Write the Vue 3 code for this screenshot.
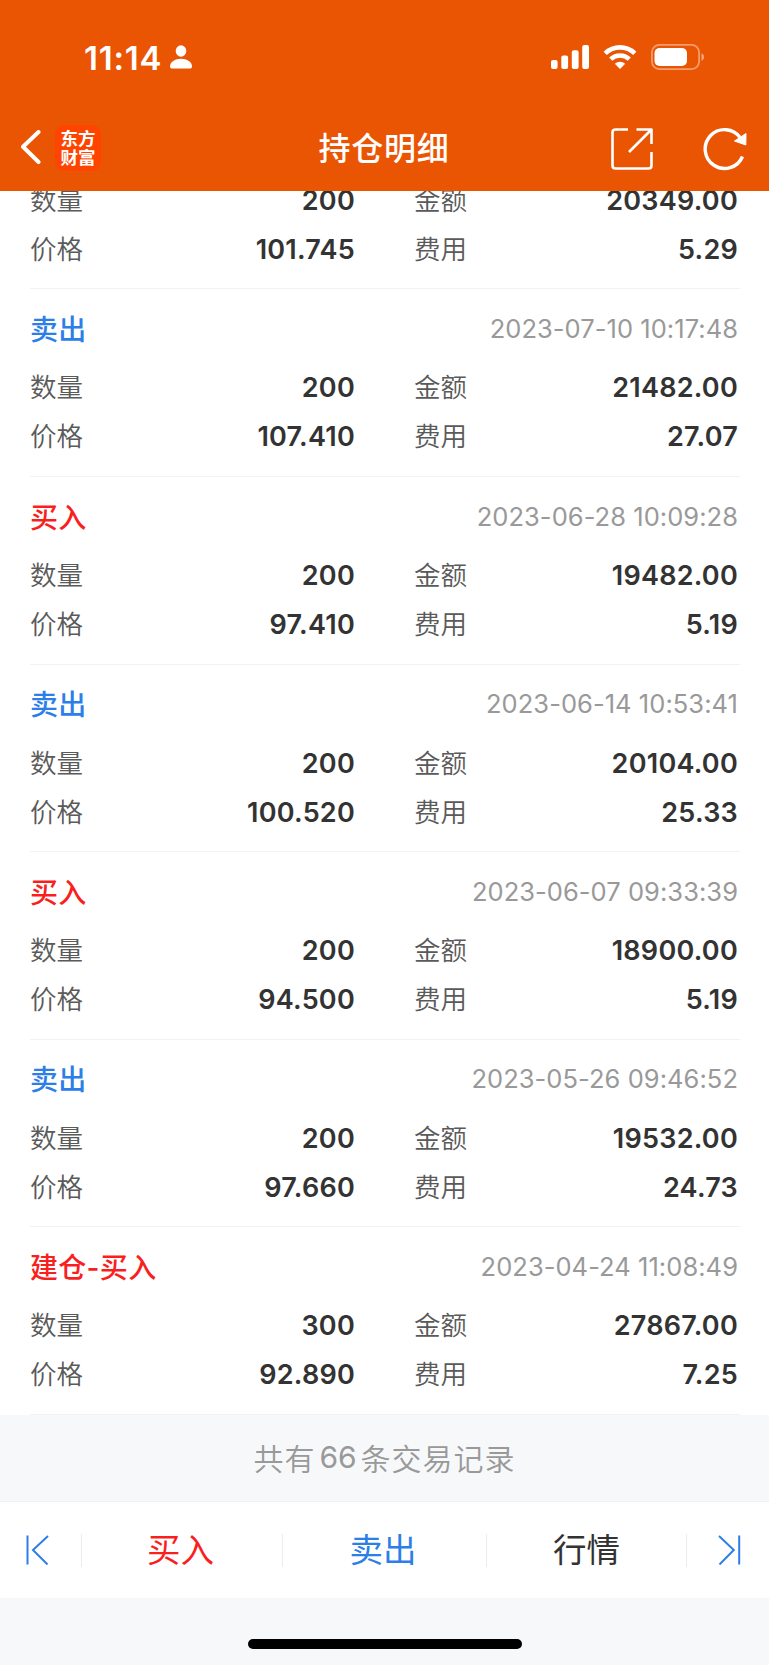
<template>
  <div class="page">
    <header class="header">
      <div class="status">
        <div class="clock">
          <span class="time">11:14</span>
          <svg class="person" width="22" height="24" viewBox="0 0 22 24">
            <ellipse cx="11" cy="6" rx="5.3" ry="5.8" />
            <path d="M0 21.5C0 17 5 13.8 11 13.8S22 17 22 21.5C22 23 21 23.5 19.8 23.5H2.2C1 23.5 0 23 0 21.5Z" />
          </svg>
        </div>
        <div class="signals">
          <svg width="38" height="24" viewBox="0 0 38 24">
            <rect x="0" y="15" width="6.6" height="9" rx="2" />
            <rect x="10.3" y="10.5" width="6.8" height="13.5" rx="2" />
            <rect x="20.8" y="5.2" width="6.8" height="18.8" rx="2" />
            <rect x="31.2" y="0" width="6.8" height="24" rx="2" />
          </svg>
          <svg class="wifi" width="34" height="24" viewBox="0 0 34 24">
            <path d="M2.2 8.3C10.5 0.4 23.5 0.4 31.8 8.3" />
            <path d="M7.7 14.1C13 9.2 21 9.2 26.3 14.1" />
            <path class="solid" d="M17 24L11.8 18.7C14.8 16 19.2 16 22.2 18.7Z" />
          </svg>
          <svg width="54" height="26" viewBox="0 0 54 26">
            <rect class="shell" x="0.9" y="0.9" width="47.2" height="24.2" rx="7.5" />
            <rect x="3.5" y="4" width="32.5" height="18" rx="5" />
            <path class="cap" d="M50.5 9.2C53.8 10.5 53.8 15.5 50.5 16.8Z" />
          </svg>
        </div>
      </div>
      <nav class="nav">
        <div class="nav-left">
          <svg class="line-icon" width="20" height="36" viewBox="0 0 20 36">
            <path class="back" d="M17.5 2L2 16.8L17.5 32" />
          </svg>
          <div class="logo"><span>东方</span><span>财富</span></div>
        </div>
        <h1 class="title">持仓明细</h1>
        <div class="nav-right">
          <svg class="line-icon" width="42" height="42" viewBox="0 0 42 42">
            <path d="M17 1.5H4.5Q1.5 1.5 1.5 4.5V37.5Q1.5 40.5 4.5 40.5H37.5Q40.5 40.5 40.5 37.5V24" />
            <path d="M25.5 1.5H40.5V16M40 2L18 24" />
          </svg>
          <svg class="line-icon" width="44" height="44" viewBox="0 0 44 44">
            <path class="arc" d="M39.5 29.5A19.4 19.4 0 1 1 37.5 11" />
            <path class="solid" d="M43 6.5L42.8 18L31.5 14Z" />
          </svg>
        </div>
      </nav>
    </header>

    <main class="list">
      <section v-for="item in records" :key="item.amount" class="record">
        <div v-if="item.type" class="record-head">
          <span class="type" :class="item.side">{{ item.type }}</span>
          <span class="date">{{ item.date }}</span>
        </div>
        <div class="row">
          <span class="label">数量</span>
          <span class="value">{{ item.count }}</span>
          <span class="label second">金额</span>
          <span class="value">{{ item.amount }}</span>
        </div>
        <div class="row">
          <span class="label">价格</span>
          <span class="value">{{ item.price }}</span>
          <span class="label second">费用</span>
          <span class="value">{{ item.fee }}</span>
        </div>
      </section>
    </main>

    <div class="total">共有<span class="num">66</span>条交易记录</div>

    <footer class="tabs">
      <div class="tab first">
        <svg class="step" width="24" height="30" viewBox="0 0 24 30">
          <path d="M1.5 0.5V29.5M22 1L7 15L21.5 29.5" />
        </svg>
      </div>
      <div class="tab buy">买入</div>
      <div class="tab sell">卖出</div>
      <div class="tab">行情</div>
      <div class="tab last">
        <svg class="step" width="24" height="30" viewBox="0 0 24 30">
          <path d="M22.2 0.5V29.5M2 1L16.8 15L2.5 29.5" />
        </svg>
      </div>
    </footer>
    <div class="home"><div class="home-bar"></div></div>
  </div>
</template>

<script setup>
const records = [
  { count: "200", amount: "20349.00", price: "101.745", fee: "5.29" },
  { type: "卖出", side: "sell", date: "2023-07-10 10:17:48", count: "200", amount: "21482.00", price: "107.410", fee: "27.07" },
  { type: "买入", side: "buy", date: "2023-06-28 10:09:28", count: "200", amount: "19482.00", price: "97.410", fee: "5.19" },
  { type: "卖出", side: "sell", date: "2023-06-14 10:53:41", count: "200", amount: "20104.00", price: "100.520", fee: "25.33" },
  { type: "买入", side: "buy", date: "2023-06-07 09:33:39", count: "200", amount: "18900.00", price: "94.500", fee: "5.19" },
  { type: "卖出", side: "sell", date: "2023-05-26 09:46:52", count: "200", amount: "19532.00", price: "97.660", fee: "24.73" },
  { type: "建仓-买入", side: "buy", date: "2023-04-24 11:08:49", count: "300", amount: "27867.00", price: "92.890", fee: "7.25" },
];
</script>

<style>
body {
  margin: 0;
  background: #f7f8fa;
}
</style>

<style scoped>
.page {
  width: 769px;
  height: 1665px;
  display: flex;
  flex-direction: column;
  overflow: hidden;
  background: #f7f8fa;
  font-family: Inter, "Noto Sans CJK SC", sans-serif;
  color: #333;
}
.header {
  height: 191px;
  flex: none;
  background: #ea5504;
  color: #fff;
}
.header svg {
  display: block;
  fill: #fff;
}
.status {
  height: 114px;
  box-sizing: border-box;
  padding: 0 64px 0 84px;
  display: flex;
  align-items: center;
  justify-content: space-between;
}
.clock {
  display: flex;
  align-items: center;
  gap: 8px;
}
.time {
  padding-top: 2px;
  font-size: 33px;
  font-weight: 600;
  line-height: 40px;
  letter-spacing: 0.8px;
}
.signals {
  display: flex;
  align-items: center;
  gap: 14px;
}
.signals .wifi {
  fill: none;
  stroke: #fff;
  stroke-width: 4.6;
}
.signals .wifi .solid {
  fill: #fff;
  stroke: none;
}
.signals .shell {
  fill: none;
  stroke: rgba(255, 255, 255, 0.42);
  stroke-width: 1.8;
}
.signals .cap {
  fill: rgba(255, 255, 255, 0.5);
}
.nav {
  height: 70px;
  padding: 0 22px 0 21px;
  display: grid;
  grid-template-columns: 1fr auto 1fr;
  align-items: center;
}
.nav-left,
.nav-right {
  display: flex;
  align-items: center;
}
.nav-left {
  gap: 14px;
  padding-bottom: 2px;
}
.nav-right {
  justify-content: flex-end;
  gap: 50px;
}
.header .line-icon {
  fill: none;
  stroke: #fff;
  stroke-width: 2.6;
  stroke-linejoin: round;
}
.header .line-icon .back {
  stroke-width: 4;
  stroke-linecap: round;
}
.header .line-icon .arc {
  stroke-width: 3.4;
}
.header .line-icon .solid {
  fill: #fff;
  stroke-width: 1;
}
.logo {
  width: 46px;
  height: 46px;
  border-radius: 9px;
  background: #ff4400;
  display: flex;
  flex-direction: column;
  align-items: center;
  justify-content: center;
  font-size: 17.5px;
  font-weight: 700;
  line-height: 19px;
}
.title {
  margin: 0;
  font-size: 32px;
  font-weight: 500;
  line-height: 44px;
  letter-spacing: 0.7px;
}
.list {
  height: 1224px;
  flex: none;
  overflow: hidden;
  background: #fff;
  display: flex;
  flex-direction: column;
  justify-content: flex-end;
}
.record {
  flex: none;
  box-sizing: border-box;
  margin: 0 29px 0 30px;
  padding: 15px 0 14.6px;
  border-bottom: 1px solid #f1f2f4;
}
.record-head {
  height: 50px;
  margin-bottom: 9px;
  padding-right: 2px;
  display: flex;
  align-items: center;
  justify-content: space-between;
}
.type {
  padding-bottom: 3px;
  font-size: 28px;
  font-weight: 500;
  letter-spacing: 0.3px;
}
.buy {
  color: #f91f1f;
}
.sell {
  color: #2c7ee8;
}
.date {
  padding-bottom: 2px;
  font-size: 25.5px;
  letter-spacing: 0.05px;
  color: #999;
}
.row {
  height: 49px;
  display: grid;
  grid-template-columns: 60px 265px 119px 264px;
  align-items: center;
}
.label {
  padding-bottom: 4px;
  font-size: 26.5px;
  font-weight: 350;
  color: #5a5a5a;
}
.label.second {
  padding-left: 59px;
}
.value {
  font-size: 27px;
  font-weight: 600;
  letter-spacing: 0.25px;
  text-align: right;
}
.total {
  height: 87px;
  flex: none;
  box-sizing: border-box;
  padding-bottom: 3px;
  border-bottom: 1px solid #eff0f2;
  display: flex;
  align-items: center;
  justify-content: center;
  font-size: 30px;
  letter-spacing: 1px;
  font-weight: 350;
  color: #999;
}
.num {
  margin: 0 4px;
  letter-spacing: 0;
  font-weight: 400;
}
.tabs {
  height: 96px;
  flex: none;
  background: #fff;
  display: grid;
  grid-template-columns: 82px 201px 204px 200px 1fr;
  align-items: center;
}
.tab {
  height: 33px;
  box-sizing: border-box;
  padding: 0 3px 5px 0;
  border-right: 1px solid #ebecee;
  display: flex;
  align-items: center;
  justify-content: center;
  font-size: 33.5px;
}
.tab:nth-child(4) {
  padding-right: 0;
}
.tab.first {
  justify-content: flex-start;
  padding: 0 0 0 26px;
}
.tab.last {
  border-right: 0;
  justify-content: flex-start;
  padding: 0 0 0 30px;
}
.step {
  fill: none;
  stroke: #2c7ee8;
  stroke-width: 2;
}
.home {
  height: 67px;
  display: flex;
  justify-content: center;
  align-items: flex-start;
}
.home-bar {
  margin-top: 41px;
  width: 274px;
  height: 10px;
  border-radius: 5px;
  background: #000;
}
</style>
